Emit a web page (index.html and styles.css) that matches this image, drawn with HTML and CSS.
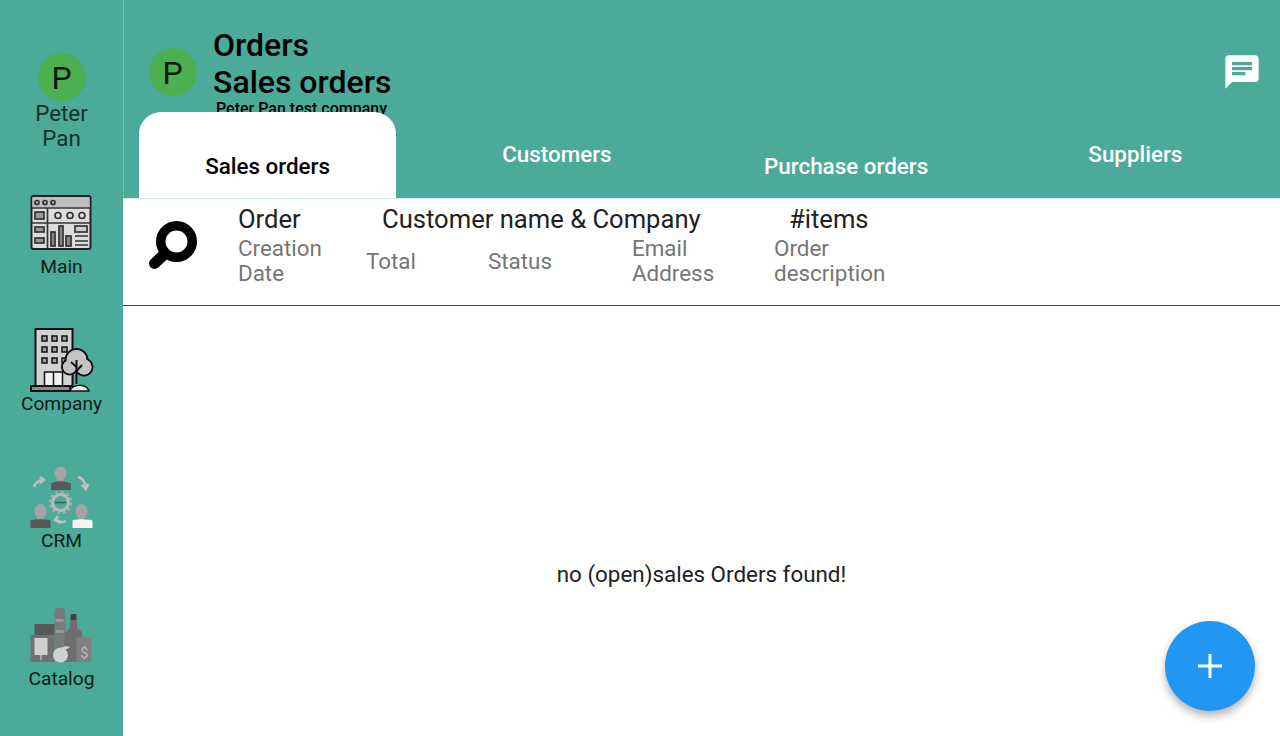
FILE: index.html
```html
<!DOCTYPE html>
<html lang="en">
<head>
<meta charset="utf-8">
<title>Orders</title>
<link rel="stylesheet" href="styles.css">
</head>
<body>
<div class="app">
  <nav class="rail">
    <div class="user">
      <div class="avatar">P</div>
      <div class="user-name">Peter<br>Pan</div>
    </div>
    <div class="nav-item">
      <svg class="nav-icon" viewBox="0 0 64 64">
        <rect x="2.500" y="3" width="59" height="53" rx="2" fill="#dcdcdc" stroke="#222" stroke-width="2"/>
        <rect x="3.500" y="4" width="57" height="10" fill="#bdbdbd"/>
        <g fill="none" stroke="#333" stroke-width="1.7">
          <circle cx="8" cy="9.500" r="2"/><circle cx="16" cy="9.500" r="2"/><circle cx="24" cy="9.500" r="2"/>
          <path d="M2 15H62M2 30H62M18.500 15V56"/>
          <rect x="6" y="19" width="9" height="7" fill="#999"/>
          <circle cx="29" cy="22.500" r="3"/><circle cx="41" cy="22.500" r="3"/><circle cx="53" cy="22.500" r="3"/>
          <rect x="6" y="34" width="9" height="5" fill="#999"/><rect x="6" y="45" width="9" height="5" fill="#999"/>
          <rect x="22" y="39" width="4" height="14" fill="#888"/><rect x="30" y="33" width="4" height="20" fill="#888"/><rect x="37" y="43" width="5" height="10" fill="#888"/>
          <rect x="46" y="33" width="12" height="6" fill="#ccc"/>
          <path d="M46 43H59M46 48H59M46 52H59"/>
        </g>
      </svg>
      <span class="nav-label">Main</span>
    </div>
    <div class="nav-item">
      <svg class="nav-icon" viewBox="0 0 64 64">
        <rect x="6.500" y="-1" width="37" height="57" fill="#d2d2d2" stroke="#111" stroke-width="2"/>
        <g fill="#a0a0a0" stroke="#111" stroke-width="1.5">
          <rect x="13" y="6" width="5" height="5"/><rect x="23" y="6" width="5" height="5"/><rect x="33" y="6" width="5" height="5"/>
          <rect x="13" y="17" width="5" height="5"/><rect x="23" y="17" width="5" height="5"/><rect x="33" y="17" width="5" height="5"/>
          <rect x="13" y="28" width="5" height="5"/><rect x="23" y="28" width="5" height="5"/><rect x="33" y="28" width="5" height="5"/>
        </g>
        <rect x="15.500" y="42" width="18" height="14" fill="#f2f2f2" stroke="#111" stroke-width="1.5"/>
        <path d="M24.500 42V56" stroke="#111" stroke-width="1.500"/>
        <rect x="2" y="56" width="39" height="5" fill="#8c8c8c" stroke="#111" stroke-width="2"/>
        <path d="M41 61C43 54 57 53 60 61Z" fill="#ededed" stroke="#111" stroke-width="1.500"/>
        <g fill="#c4c4c4" stroke="#111" stroke-width="2">
          <circle cx="47.500" cy="30" r="11"/><circle cx="40.500" cy="37" r="7.500"/><circle cx="55" cy="37" r="8.500"/>
        </g>
        <g fill="#c4c4c4">
          <circle cx="47.500" cy="30" r="10"/><circle cx="40.500" cy="37" r="6.500"/><circle cx="55" cy="37" r="7.500"/>
        </g>
        <path d="M47.500 54V30M47.500 37L42 32M47.500 41L53 35" fill="none" stroke="#111" stroke-width="2"/>
      </svg>
      <span class="nav-label">Company</span>
    </div>
    <div class="nav-item">
      <svg class="nav-icon" viewBox="0 0 64 64">
        <g fill="#a4a4a4">
          <ellipse cx="31.500" cy="6.500" rx="6" ry="7"/><rect x="28.500" y="12" width="6" height="4"/>
          <ellipse cx="11.500" cy="44.500" rx="6" ry="7.500"/><rect x="8.500" y="50" width="6" height="4"/>
          <ellipse cx="52.500" cy="44.500" rx="6" ry="7.500"/><rect x="49.500" y="50" width="6" height="4"/>
        </g>
        <path d="M22 23V17C22 15 28 15 31.500 14C35 15 42 15 42 17V23Z" fill="#585858"/>
        <path d="M1.500 61V54C1.500 52 8 53 11.500 52C15 53 21.500 52 21.500 54V61Z" fill="#585858"/>
        <path d="M43.500 61V54C43.500 52 49 53 52.500 52C56 53 63.500 52 63.500 54V61Z" fill="#f4f4f4"/>
        <circle cx="31.500" cy="35.500" r="8" fill="none" stroke="#bbb" stroke-width="3"/>
        <circle cx="31.500" cy="35.500" r="10.500" fill="none" stroke="#aaa" stroke-width="2.500" stroke-dasharray="3 2.500"/>
        <path d="M26 35.500H37" stroke="#555" stroke-width="1.500"/>
        <g fill="none" stroke="#c0c0c0" stroke-width="2.500">
          <path d="M5 20C6 16 10 13 14 13M11 10L15 13L11 16"/>
          <path d="M49 10C53 11 56 15 57 20M53 18L57 22L59 17"/>
          <path d="M26 52C30 56 33 56 37 54M29 49L26 53L31 56"/>
        </g>
      </svg>
      <span class="nav-label">CRM</span>
    </div>
    <div class="nav-item">
      <svg class="nav-icon" viewBox="0 0 64 64">
        <rect x="25.500" y="3" width="11" height="44" rx="4" fill="#7a7a7a"/>
        <rect x="26.500" y="14" width="8" height="3" fill="#999"/><rect x="26.500" y="25" width="8" height="3" fill="#999"/>
        <rect x="41.500" y="9" width="6" height="6" fill="#444"/>
        <path d="M41 15H48V23C52 25 53.500 27 53.500 31V57H35.500V31C35.500 27 39 25 41 23Z" fill="#6e6e6e"/>
        <rect x="5.500" y="19" width="20" height="11" fill="#585858"/>
        <rect x="1.500" y="30" width="24" height="27" fill="#707070"/>
        <rect x="5.500" y="33" width="13" height="17" fill="#cfcfcf"/>
        <path d="M12 50V55" stroke="#bbb" stroke-width="1.500"/>
        <rect x="47.500" y="32" width="15" height="25" fill="#808080"/>
        <text class="dollar" x="51" y="53">$</text>
        <circle cx="31.500" cy="50" r="7.500" fill="#d0d0d0"/>
        <path d="M32 43C35 41 38 41 41 42C38 45 35 45 32 43Z" fill="#d0d0d0"/>
      </svg>
      <span class="nav-label">Catalog</span>
    </div>
  </nav>

  <main class="content">
    <header class="header">
      <div class="title-row">
        <div class="avatar">P</div>
        <div class="titles">
          <div class="title">Orders</div>
          <div class="title">Sales orders</div>
          <div class="subtitle">Peter Pan test company</div>
        </div>
        <svg class="chat" viewBox="0 0 24 24">
          <path d="M20 2H4c-1.1 0-1.99.9-1.99 2L2 22l4-4h14c1.1 0 2-.9 2-2V4c0-1.1-.9-2-2-2zM6 9h12v2H6V9zm8 5H6v-2h8v2zm4-6H6V6h12v2z"/>
        </svg>
      </div>
      <div class="tabs">
        <div class="tab tab-active"><span>Sales orders</span></div>
        <div class="tab">Customers</div>
        <div class="tab tab-low">Purchase orders</div>
        <div class="tab">Suppliers</div>
      </div>
    </header>

    <section class="table-head">
      <svg class="search" viewBox="0 0 48 48">
        <circle cx="27.500" cy="20.500" r="15.750" fill="none" stroke="#000" stroke-width="9.500"/>
        <path d="M14.500 34L5.500 42.500" stroke="#000" stroke-width="11" stroke-linecap="round"/>
      </svg>
      <div class="cols">
        <div class="row-main">
          <span class="c-order">Order</span>
          <span class="c-customer">Customer name &amp; Company</span>
          <span>#items</span>
        </div>
        <div class="row-sub">
          <span class="c-date">Creation<br>Date</span>
          <span class="c-total">Total</span>
          <span class="c-status">Status</span>
          <span class="c-email">Email<br>Address</span>
          <span>Order<br>description</span>
        </div>
      </div>
    </section>

    <section class="empty">no (open)sales Orders found!</section>
  </main>

  <button class="fab" type="button" aria-label="Add">
    <svg viewBox="0 0 24 24" class="fab-icon"><path d="M0 10.500H24V13.500H0ZM10.500 0H13.500V24H10.500Z"/></svg>
  </button>
</div>
</body>
</html>
```
FILE: styles.css
```css
* { box-sizing: border-box; }
html, body { margin: 0; height: 100%; }
body {
  font-family: Roboto, "Liberation Sans", sans-serif;
  color: #212121;
  background: #fff;
  overflow: hidden;
}
.app {
  position: relative;
  display: flex;
  width: 1280px;
  height: 736px;
}
.rail {
  width: 123px;
  flex: none;
  background: #4caa9b;
  display: flex;
  flex-direction: column;
  align-items: center;
}
.user {
  height: 192.6px;
  flex: none;
  padding-top: 53px;
  display: flex;
  flex-direction: column;
  align-items: center;
}
.avatar {
  width: 48px;
  height: 48px;
  flex: none;
  padding-right: 1px;
  border-radius: 50%;
  background: #4caf50;
  color: #0b1a10;
  font-size: 32px;
  line-height: 50px;
  text-align: center;
}
.user .avatar { margin-left: 1px; }
.user-name {
  font-size: 22.4px;
  line-height: 25px;
  text-align: center;
  color: #16302b;
}
.nav-item {
  height: 137.33px;
  flex: none;
  display: flex;
  flex-direction: column;
  align-items: center;
}
.nav-icon { width: 64px; height: 64px; flex: none; overflow: visible; margin-right: 1px; }
.nav-label {
  font-size: 19.2px;
  line-height: 20px;
  color: #0c1d1a;
}
.dollar { font-size: 15px; fill: #bbb; font-family: Roboto, sans-serif; }
.content {
  flex: 1;
  min-width: 0;
  display: flex;
  flex-direction: column;
}
.header {
  height: 199px;
  flex: none;
  background: #4caa9b;
  border-left: 1px solid #72bbaf;
  border-bottom: 1px solid #d5ebe7;
}
.title-row {
  height: 144px;
  margin-bottom: -32px;
  padding: 0 18px 0 25px;
  display: flex;
  align-items: center;
}
.titles { margin-left: 16px; padding-top: 1px; flex: 1; color: #000; }
.title {
  font-size: 32px;
  line-height: 37px;
  font-weight: 500;
}
.subtitle {
  margin: -1px 0 0 3px;
  font-size: 16px;
  line-height: 18px;
  font-weight: 500;
}
.chat { width: 40px; height: 40px; fill: #fff; }
.tabs {
  position: relative;
  display: grid;
  grid-template-columns: repeat(4, 1fr);
  height: 86px;
  margin-left: -1px;
}
.tab {
  display: flex;
  align-items: center;
  justify-content: center;
  padding-bottom: 2px;
  color: #fff;
  font-size: 22.4px;
  font-weight: 500;
}
.tab-low { padding: 22px 0 0; }
.tab-active {
  padding: 22px 0 0;
  margin: 0 16px;
  background: #fff;
  color: #000;
  border-radius: 22px 22px 0 0;
}
.table-head {
  height: 107px;
  flex: none;
  display: flex;
  align-items: flex-start;
  border-bottom: 1px solid #444;
}
.search {
  width: 48px;
  height: 48px;
  flex: none;
  margin: 22px 41px 0 26px;
}
.cols { flex: 1; padding-top: 6px; }
.row-main {
  display: flex;
  font-size: 25.6px;
  line-height: 29px;
  color: #212121;
}
.c-order { width: 144px; }
.c-customer { width: 407px; }
.row-sub {
  display: flex;
  align-items: center;
  margin-top: 2px;
  font-size: 22.4px;
  line-height: 25px;
  color: #757575;
}
.c-date { width: 128px; }
.c-total { width: 122px; }
.c-status { width: 144px; }
.c-email { width: 142px; }
.empty {
  flex: 1;
  display: flex;
  align-items: center;
  justify-content: center;
  padding-top: 106px;
  font-size: 22.4px;
  color: #212121;
}
.fab {
  position: absolute;
  left: 1165px;
  top: 621px;
  width: 90px;
  height: 90px;
  padding: 0;
  border: 0;
  border-radius: 50%;
  background: #2196f3;
  box-shadow: 0 5px 9px rgba(0, 0, 0, 0.3);
  display: flex;
  align-items: center;
  justify-content: center;
}
.fab-icon { width: 24px; height: 24px; fill: #fff; }
```
